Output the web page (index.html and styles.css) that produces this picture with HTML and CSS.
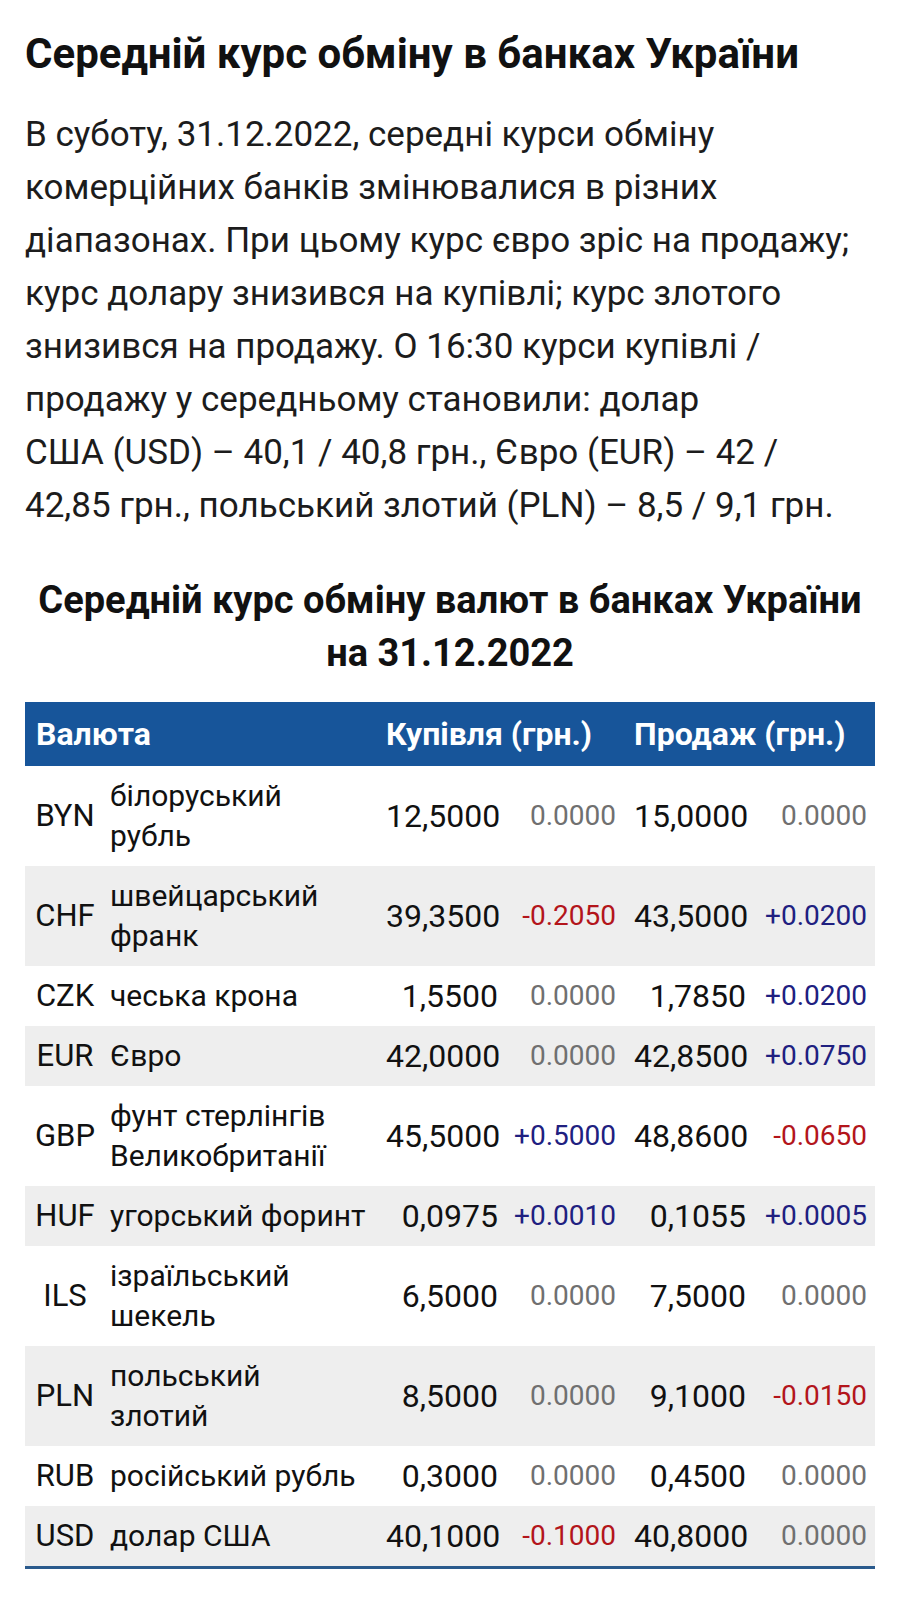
FILE: index.html
```html
<!DOCTYPE html>
<html lang="uk">
<head>
<meta charset="utf-8">
<title>Середній курс обміну в банках України</title>
<link rel="stylesheet" href="styles.css">
</head>
<body>
<main class="page">
  <h1 class="title">Середній курс обміну в банках України</h1>
  <p class="lead">В суботу, 31.12.2022, середні курси обміну<br>комерційних банків змінювалися в різних<br>діапазонах. При цьому курс євро зріс на продажу;<br>курс долару знизився на купівлі; курс злотого<br>знизився на продажу. О 16:30 курси купівлі /<br>продажу у середньому становили: долар<br>США (USD) – 40,1 / 40,8 грн., Євро (EUR) – 42 /<br>42,85 грн., польський злотий (PLN) – 8,5 / 9,1 грн.</p>

  <h2 class="caption">Середній курс обміну валют в банках України<br>на 31.12.2022</h2>

  <table class="rates">
    <colgroup>
      <col class="c-code"><col class="c-name"><col class="c-val"><col class="c-delta1"><col class="c-val2"><col class="c-delta2">
    </colgroup>
    <thead>
      <tr>
        <th colspan="2" class="h-cur">Валюта</th>
        <th colspan="2">Купівля (грн.)</th>
        <th colspan="2">Продаж (грн.)</th>
      </tr>
    </thead>
    <tbody>
      <tr><td class="code">BYN</td><td class="name">білоруський<br>рубль</td><td class="val">12,5000</td><td class="d zero">0.0000</td><td class="val">15,0000</td><td class="d zero">0.0000</td></tr>
      <tr><td class="code">CHF</td><td class="name">швейцарський<br>франк</td><td class="val">39,3500</td><td class="d down">-0.2050</td><td class="val">43,5000</td><td class="d up">+0.0200</td></tr>
      <tr><td class="code">CZK</td><td class="name">чеська крона</td><td class="val">1,5500</td><td class="d zero">0.0000</td><td class="val">1,7850</td><td class="d up">+0.0200</td></tr>
      <tr><td class="code">EUR</td><td class="name">Євро</td><td class="val">42,0000</td><td class="d zero">0.0000</td><td class="val">42,8500</td><td class="d up">+0.0750</td></tr>
      <tr><td class="code">GBP</td><td class="name">фунт стерлінгів<br>Великобританії</td><td class="val">45,5000</td><td class="d up">+0.5000</td><td class="val">48,8600</td><td class="d down">-0.0650</td></tr>
      <tr><td class="code">HUF</td><td class="name">угорський форинт</td><td class="val">0,0975</td><td class="d up">+0.0010</td><td class="val">0,1055</td><td class="d up">+0.0005</td></tr>
      <tr><td class="code">ILS</td><td class="name">ізраїльський<br>шекель</td><td class="val">6,5000</td><td class="d zero">0.0000</td><td class="val">7,5000</td><td class="d zero">0.0000</td></tr>
      <tr><td class="code">PLN</td><td class="name">польський<br>злотий</td><td class="val">8,5000</td><td class="d zero">0.0000</td><td class="val">9,1000</td><td class="d down">-0.0150</td></tr>
      <tr><td class="code">RUB</td><td class="name">російський рубль</td><td class="val">0,3000</td><td class="d zero">0.0000</td><td class="val">0,4500</td><td class="d zero">0.0000</td></tr>
      <tr><td class="code">USD</td><td class="name">долар США</td><td class="val">40,1000</td><td class="d down">-0.1000</td><td class="val">40,8000</td><td class="d zero">0.0000</td></tr>
    </tbody>
  </table>
</main>
</body>
</html>
```

FILE: styles.css
```css
html, body {
  margin: 0;
  padding: 0;
  background: #ffffff;
}

body {
  font-family: Roboto, "Noto Sans", "Liberation Sans", sans-serif;
  color: #111111;
}

.page {
  padding: 0 25px;
}

.title {
  margin: 0;
  padding-top: 30px;
  font-size: 42px;
  line-height: 48px;
  font-weight: 700;
  color: #111;
  white-space: nowrap;
}

.lead {
  margin: 30px 0 0;
  font-size: 35px;
  line-height: 53px;
  font-weight: 400;
  color: #1c1c1c;
  white-space: nowrap;
}

.caption {
  margin: 42px 0 0;
  text-align: center;
  font-size: 38px;
  line-height: 53px;
  font-weight: 700;
  color: #111;
  white-space: nowrap;
}

.rates {
  margin-top: 22px;
  width: 850px;
  border-collapse: collapse;
  table-layout: fixed;
  border-bottom: 3px solid #2a5a8c;
}

.c-code { width: 80px; }
.c-name { width: 276px; }
.c-val { width: 122px; }
.c-delta1 { width: 126px; }
.c-val2 { width: 122px; }
.c-delta2 { width: 124px; }

.rates thead tr {
  background: #17559a;
}

.rates th {
  height: 64px;
  padding: 0 5px;
  text-align: left;
  color: #ffffff;
  font-size: 32px;
  font-weight: 700;
  white-space: nowrap;
}

.rates th.h-cur {
  padding-left: 11px;
}

.rates td {
  padding: 10px 5px 10px;
  font-size: 32px;
  line-height: 40px;
  white-space: nowrap;
  vertical-align: middle;
  color: #111;
}

.rates tbody tr:nth-child(even) {
  background: #eeeeee;
}

.rates td.code {
  text-align: center;
  font-size: 31px;
  padding-left: 0;
  padding-right: 0;
}

.rates td.name {
  text-align: left;
  font-size: 30px;
}

.rates td.val {
  text-align: right;
}

.rates td.d {
  text-align: right;
  font-size: 28px;
  padding-right: 13px;
}

.rates td:last-child {
  padding-right: 8px;
}

.d.zero { color: #707070; }
.d.down { color: #b3151b; }
.d.up { color: #202080; }
```
